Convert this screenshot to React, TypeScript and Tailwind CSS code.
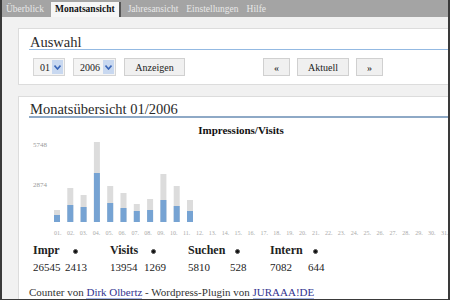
import React from "react";

// Tagesdaten (Impressions gesamt / davon Visits) in Pixeln relativ zu 5748
const DAYS: { impr: number; visits: number }[] = [
  { impr: 12, visits: 7 },
  { impr: 34, visits: 17 },
  { impr: 27, visits: 15 },
  { impr: 80, visits: 49 },
  { impr: 36, visits: 19 },
  { impr: 29, visits: 14 },
  { impr: 18, visits: 11 },
  { impr: 23, visits: 12 },
  { impr: 48, visits: 22 },
  { impr: 36, visits: 16 },
  { impr: 22, visits: 11 },
];

const TABS = ["Überblick", "Monatsansicht", "Jahresansicht", "Einstellungen", "Hilfe"];

function Panel({ title, line, children }: { title: string; line: string; children: React.ReactNode }) {
  return (
    <div className="mr-[-12px] border border-[#dcdcdc] bg-white pl-[10px]">
      <div className={`${line} pl-[1px] font-['Liberation_Serif',serif] text-[14.5px] leading-[14px] text-[#2a2a2a]`}>
        {title}
      </div>
      {children}
    </div>
  );
}

function Select({ value, width }: { value: string; width: string }) {
  return (
    <div className={`flex h-[18px] items-center justify-between border border-[#d6d6d6] bg-[#f4f4f4] pl-[6px] pr-[1px] ${width}`}>
      <span className="text-[10px]">{value}</span>
      <span className="flex h-[14px] w-[11px] items-center justify-center bg-[#c8d8f0]">
        <svg width="7" height="5" viewBox="0 0 7 5">
          <path d="M0.5 0.5 L3.5 4 L6.5 0.5" fill="none" stroke="#3a66b8" strokeWidth="1.6" />
        </svg>
      </span>
    </div>
  );
}

function Btn({ label, width }: { label: string; width: string }) {
  return (
    <div className={`flex h-[18px] items-center justify-center border border-[#d0d0d0] bg-[#f0f0f0] text-[10px] ${width}`}>
      {label}
    </div>
  );
}

function Dot() {
  return <span className="inline-block h-[5px] w-[5px] rounded-full border border-[#555] bg-[#111]" />;
}

function Chart() {
  const base = 104;
  return (
    <svg width="420" height="121" className="block" style={{ fontFamily: '"Liberation Serif", serif' }}>
      <text x="212" y="16" textAnchor="middle" fontSize="11" fontWeight="bold" fill="#111">
        Impressions/Visits
      </text>
      <text x="4" y="29" fontSize="7" fill="#999">5748</text>
      <text x="4" y="69" fontSize="7" fill="#999">2874</text>
      {DAYS.map((d, i) => {
        const x = 25 + i * 13.3;
        return (
          <g key={i}>
            <rect x={x} y={base - d.impr} width="6" height={d.impr} fill="#dcdcdc" />
            <rect x={x} y={base - d.visits} width="6" height={d.visits} fill="#76a3d3" />
          </g>
        );
      })}
      {Array.from({ length: 31 }, (_, i) => (
        <text key={i} x={25 + i * 12.9} y="117" fontSize="6" fill="#aaa">
          {String(i + 1).padStart(2, "0")}.
        </text>
      ))}
    </svg>
  );
}

export default function App() {
  return (
    <div
      className="h-[300px] w-[450px] overflow-hidden border-b border-l-2 border-r-2 border-[#3a3a3a] bg-[#f1f1f1] text-[#222]"
      style={{ fontFamily: '"Liberation Serif", serif' }}
    >
      <div className="flex h-[17px] items-end bg-[#a4a4a4] text-[9.5px]">
        {TABS.map((t) =>
          t === "Monatsansicht" ? (
            <div key={t} className="mx-[3px] flex h-[15px] items-center border-r-2 border-[#555] bg-[#f6f6f6] px-[4px] font-bold text-[#111]">
              {t}
            </div>
          ) : (
            <div key={t} className="flex h-[15px] items-center px-[4px] text-[#e8e8e8]">
              {t}
            </div>
          )
        )}
      </div>

      <div className="ml-[16px] mt-[11px] flex flex-col gap-[11px]">
        <Panel title="Auswahl" line="pt-[6px] border-b border-[#93b9e2]">
          <div className="mt-[8px] mb-[8px] flex items-center pl-[4px]">
            <Select value="01" width="w-[32px]" />
            <div className="w-[8px]" />
            <Select value="2006" width="w-[43px]" />
            <div className="w-[8px]" />
            <Btn label="Anzeigen" width="w-[61px]" />
            <div className="w-[78px]" />
            <Btn label="«" width="w-[27px]" />
            <div className="w-[7px]" />
            <Btn label="Aktuell" width="w-[52px]" />
            <div className="w-[7px]" />
            <Btn label="»" width="w-[27px]" />
          </div>
        </Panel>

        <Panel title="Monatsübersicht 01/2006" line="pt-[5px] border-b-2 border-[#8ea9c6]">
          <Chart />
          <div className="mt-[3px] pl-[4px]">
            <div className="flex h-[16px] items-center text-[12px] font-bold">
              <div className="w-[32px]">Impr</div>
              <div className="w-[45px] pl-[8px]"><Dot /></div>
              <div className="w-[34px]">Visits</div>
              <div className="w-[44px] pl-[7px]"><Dot /></div>
              <div className="w-[42px]">Suchen</div>
              <div className="w-[40px] pl-[5px]"><Dot /></div>
              <div className="w-[38px]">Intern</div>
              <div className="pl-[5px]"><Dot /></div>
            </div>
            <div className="mt-[1px] flex h-[16px] items-center text-[11px]">
              <div className="w-[32px]">26545</div>
              <div className="w-[45px]">2413</div>
              <div className="w-[34px]">13954</div>
              <div className="w-[44px]">1269</div>
              <div className="w-[42px]">5810</div>
              <div className="w-[40px]">528</div>
              <div className="w-[38px]">7082</div>
              <div>644</div>
            </div>
          </div>
          <div className="mt-[9px] text-[11px] text-[#333]">
            Counter von{" "}
            <a className="border-b border-[#aab8e8] text-[#33338f]">Dirk Olbertz</a> - Wordpress-Plugin von{" "}
            <a className="border-b border-[#aab8e8] text-[#33338f]">JURAAA!DE</a>
          </div>
        </Panel>
      </div>
    </div>
  );
}
